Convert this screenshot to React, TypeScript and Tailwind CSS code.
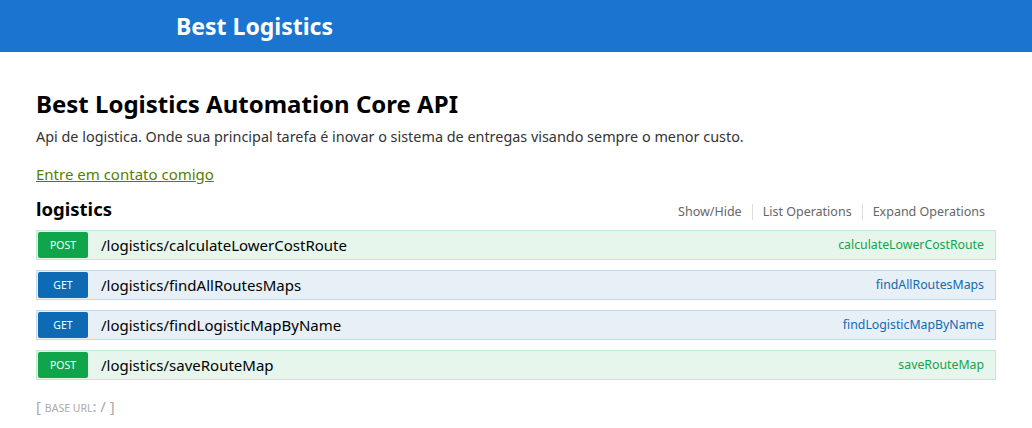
const ops = [
  { method: 'POST', path: '/logistics/calculateLowerCostRoute', nick: 'calculateLowerCostRoute' },
  { method: 'GET', path: '/logistics/findAllRoutesMaps', nick: 'findAllRoutesMaps' },
  { method: 'GET', path: '/logistics/findLogisticMapByName', nick: 'findLogisticMapByName' },
  { method: 'POST', path: '/logistics/saveRouteMap', nick: 'saveRouteMap' },
];

function Operation({ method, path, nick }: { method: string; path: string; nick: string }) {
  const isPost = method === 'POST';
  return (
    <li
      className={`flex items-center h-[30px] border p-px ${
        isPost ? 'bg-[#e7f6ec] border-[#c3e8d1]' : 'bg-[#e7f0f7] border-[#c3d9ec]'
      }`}
    >
      <span
        className={`w-[50px] h-full flex items-center justify-center pt-px rounded-[2px] text-[10.5px] text-white ${
          isPost ? 'bg-[#10a54a]' : 'bg-[#0f6ab4]'
        }`}
      >
        {method}
      </span>
      <span className="ml-[13px] text-[15px] text-black">{path}</span>
      <span className={`ml-auto mr-[10px] text-[12.3px] ${isPost ? 'text-[#10a54a]' : 'text-[#0f6ab4]'}`}>
        {nick}
      </span>
    </li>
  );
}

export default function App() {
  return (
    <div className="min-h-[428px] bg-white font-['Noto_Sans',sans-serif] text-[#333]">
      {/* Header */}
      <div className="h-[52px] bg-[#1b75d0] flex items-center">
        <span className="ml-[176px] text-[23px] font-bold text-white">Best Logistics</span>
      </div>

      <div className="mx-[36px] pt-[37px]">
        <h1 className="text-[24px] font-bold text-black leading-[30px]">Best Logistics Automation Core API</h1>
        <p className="mt-[9px] text-[14.4px] text-[#333] leading-[18px]">
          Api de logistica. Onde sua principal tarefa é inovar o sistema de entregas visando sempre o menor custo.
        </p>
        <a href="#" className="block mt-[17px] text-[15px] leading-[22px] text-[#547f00] underline">
          Entre em contato comigo
        </a>

        <div className="mt-[12px] flex items-end justify-between">
          <h2 className="text-[18.5px] font-bold text-black leading-[24px]">logistics</h2>
          <ul className="flex text-[12.5px] text-[#666] leading-[16px] mr-[11px] mb-[1px]">
            <li className="pr-[10px] border-r border-[#ddd]">Show/Hide</li>
            <li className="px-[10px] border-r border-[#ddd]">List Operations</li>
            <li className="pl-[10px]">Expand Operations</li>
          </ul>
        </div>

        <ul className="mt-[9px] flex flex-col gap-[10px]">
          {ops.map((op) => (
            <Operation key={op.path} {...op} />
          ))}
        </ul>

        <div className="mt-[16px] text-[15px] text-[#aaa] leading-[20px]">
          [ <span className="text-[10.5px] uppercase">base url</span>: / ]
        </div>
      </div>
    </div>
  );
}
